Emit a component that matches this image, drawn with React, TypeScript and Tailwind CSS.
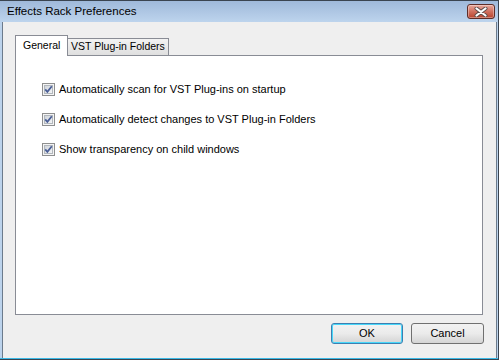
import React from 'react';

const font = { fontFamily: '"Liberation Sans", Arial, sans-serif' };

function CheckBox() {
  return (
    <svg width="13" height="13" viewBox="0 0 13 13" className="shrink-0">
      <defs>
        <linearGradient id="cbfill" x1="0" y1="0" x2="1" y2="1">
          <stop offset="0" stopColor="#cdd2d8" />
          <stop offset="1" stopColor="#f6f7f8" />
        </linearGradient>
      </defs>
      <rect x="0.5" y="0.5" width="12" height="12" fill="#f4f4f4" stroke="#8e8f8f" />
      <rect x="2.5" y="2.5" width="8" height="8" fill="url(#cbfill)" stroke="#b2b7bd" />
      <path d="M3.2 6.3 L5.4 8.8 L9.8 3.2" fill="none" stroke="#4a5f97" strokeWidth="1.8" />
    </svg>
  );
}

function CheckRow({ label }: { label: string }) {
  return (
    <label className="flex h-[13px] items-center gap-[4px] text-[11px] leading-none text-black">
      <CheckBox />
      <span>{label}</span>
    </label>
  );
}

function CloseButton() {
  return (
    <div className="flex h-[15px] w-[28px] items-center justify-center rounded-[3px] border border-[#5e2d28] bg-gradient-to-b from-[#e8a89c] via-[#d0705f] to-[#b8412b] shadow-[inset_0_0_0_1px_rgba(255,255,255,0.35)]">
      <svg width="14" height="10" viewBox="0 0 14 10">
        <path d="M2.5 1.5 L11.5 8.5 M11.5 1.5 L2.5 8.5" stroke="#5b4a48" strokeWidth="4" strokeLinecap="round" />
        <path d="M2.5 1.5 L11.5 8.5 M11.5 1.5 L2.5 8.5" stroke="#ffffff" strokeWidth="2.2" strokeLinecap="round" />
      </svg>
    </div>
  );
}

export default function App() {
  return (
    <div
      style={font}
      className="flex h-[360px] w-[499px] flex-col border-t border-r border-b border-[#3a4450] bg-[#bcd3ec]"
    >
      <div className="flex h-[21px] shrink-0 items-center justify-between bg-gradient-to-b from-[#9fb9da] to-[#bdd4ed] pl-[7px] pr-[3px]">
        <span className="text-[11.5px] text-black">Effects Rack Preferences</span>
        <CloseButton />
      </div>

      <div className="ml-[2px] mr-[1px] flex flex-1 flex-col border-l border-r border-[#6c7b8c] bg-[#efefef] pl-[12px] pt-[13px]">
        <div className="flex h-[20px] items-end">
          <div className="relative z-10 -mb-px flex h-[21px] w-[53px] items-start border border-b-0 border-[#898c95] bg-white pl-[7px] pt-[4px] text-[10.5px] leading-none text-black">
            General
          </div>
          <div className="flex h-[17px] w-[101px] items-start justify-center border-t border-r border-[#898c95] bg-gradient-to-b from-[#f3f3f3] to-[#dfdfdf] pt-[2px] text-[10.5px] leading-none text-black">
            VST Plug-in Folders
          </div>
        </div>

        <div className="flex h-[260px] w-[468px] flex-col gap-[17px] border border-[#898c95] bg-white pl-[26px] pt-[27px]">
          <CheckRow label="Automatically scan for VST Plug-ins on startup" />
          <CheckRow label="Automatically detect changes to VST Plug-in Folders" />
          <CheckRow label="Show transparency on child windows" />
        </div>

        <div className="mt-[8px] flex w-[469px] justify-end gap-[8px]">
          <button className="h-[21px] w-[72px] rounded-[3px] border border-[#3c7fb1] bg-gradient-to-b from-[#f2f2f2] via-[#ebebeb] to-[#d4d4d4] text-[11px] text-black shadow-[inset_0_0_0_1px_#48d7f9]">
            OK
          </button>
          <button className="h-[21px] w-[73px] rounded-[3px] border border-[#707070] bg-gradient-to-b from-[#f2f2f2] via-[#ebebeb] to-[#d4d4d4] text-[11px] text-black">
            Cancel
          </button>
        </div>
      </div>
      <div className="h-px shrink-0 bg-[#3ab9e6]" />
    </div>
  );
}
